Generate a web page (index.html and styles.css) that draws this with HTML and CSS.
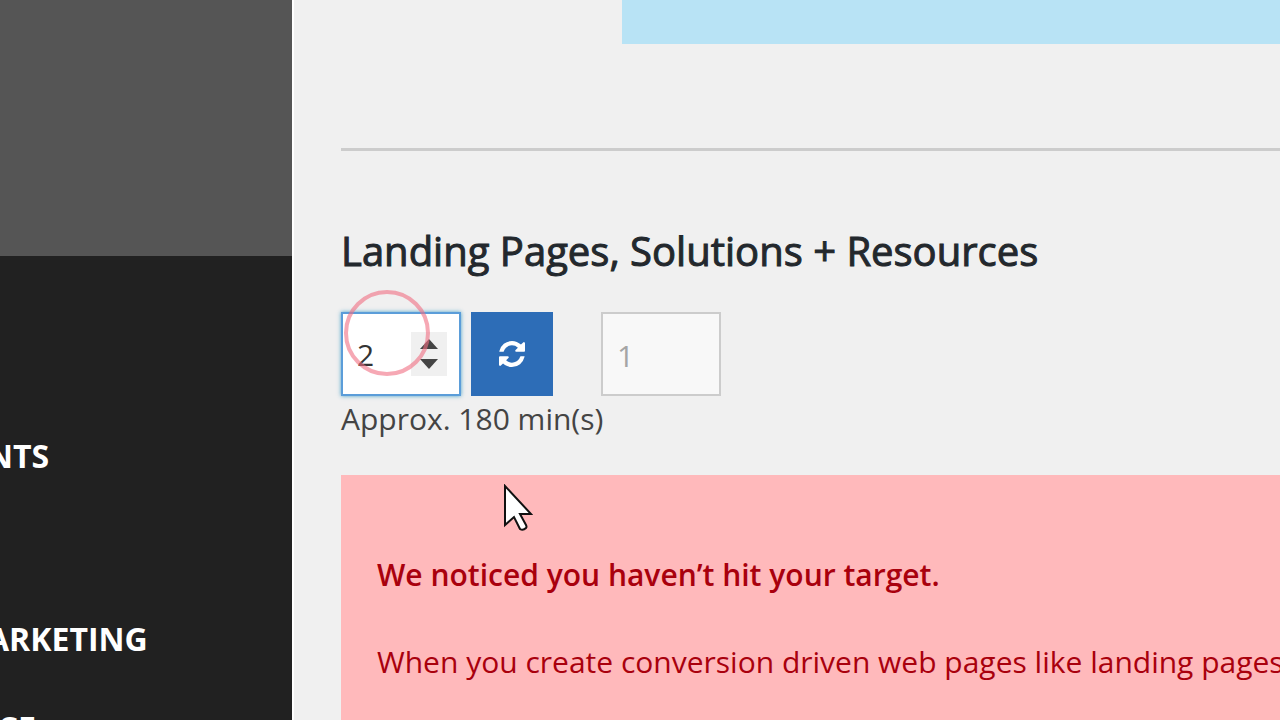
FILE: index.html
```html
<!DOCTYPE html>
<html lang="en">
<head>
    <meta charset="UTF-8">
    <meta name="viewport" content="width=device-width, initial-scale=1.0">
    <title>Landing Pages, Solutions + Resources</title>
    <link rel="stylesheet" href="styles.css">
</head>
<body>
    <aside class="sidebar">
        <div class="sidebar-head"></div>
        <nav class="menu">
            <a href="#">NTS</a>
            <a href="#" class="group">ARKETING</a>
            <a href="#">ICE</a>
        </nav>
    </aside>

    <main class="content">
        <div class="info-box"></div>
        <hr>

        <h2>Landing Pages, Solutions + Resources</h2>
        <form class="target-row">
            <div class="number-box">
                <input type="number" id="target" value="2" aria-label="Target pages">
                <div class="spinner">
                    <button type="button" aria-label="Increase"><svg viewBox="0 0 18 10"><path d="M0 10 9 0l9 10z"/></svg></button>
                    <button type="button" aria-label="Decrease"><svg viewBox="0 0 18 10"><path d="M0 0l9 10 9-10z"/></svg></button>
                </div>
                <span class="click-ring"></span>
            </div>
            <button type="button" class="refresh" aria-label="Refresh">
                <svg viewBox="0 0 1536 1536"><path d="M1511 928q0 5-1 7-64 268-268 434.500T764 1536q-146 0-282.500-55T238 1324l-129 129q-19 19-45 19t-45-19-19-45V960q0-26 19-45t45-19h448q26 0 45 19t19 45-19 45l-137 137q71 66 161 102t187 36q134 0 250-65t186-179q11-17 53-117 8-23 30-23h192q13 0 22.500 9.500t9.500 22.500zm25-800v448q0 26-19 45t-45 19h-448q-26 0-45-19t-19-45 19-45l138-138Q969 256 768 256q-134 0-250 65T332 500q-11 17-53 117-8 23-30 23H50q-13 0-22.500-9.500T18 608v-7q65-268 270-434.500T768 0q146 0 284 55.500T1297 212l130-129q19-19 45-19t45 19 19 45z"/></svg>
            </button>
            <input type="number" class="current" value="1" aria-label="Current pages" disabled>
        </form>
        <p class="approx">Approx. 180 min(s)</p>

        <section class="alert">
            <svg class="cursor" viewBox="0 0 30 48"><path d="M2 2v39l9-8 6 12q3 2 6-1 1-1 0-3l-6-11h11z"/></svg>
            <p><strong>We noticed you haven’t hit your target.</strong></p>
            <p>When you create conversion driven web pages like landing pages,</p>
        </section>
    </main>
</body>
</html>
```
FILE: styles.css
```css
* {
    box-sizing: border-box;
}
body {
    margin: 0;
    height: 100vh;
    overflow: hidden;
    display: flex;
    background: #f0f0f0;
    color: #444;
    font-family: "Open Sans", "Noto Sans", sans-serif;
    font-size: 30px;
    line-height: 40px;
}

/* Sidebar */
.sidebar {
    flex: 0 0 294px;
    overflow: hidden;
    background: #212121;
    border-right: 2px solid #fff;
}
.sidebar-head {
    height: 256px;
    background: #555;
}
.menu {
    display: flex;
    flex-direction: column;
    gap: 49px;
    padding-top: 180px;
    margin-left: -13px;
}
.menu a {
    color: #fff;
    font-size: 32px;
    font-weight: 700;
    text-decoration: none;
    white-space: nowrap;
}
.menu .group {
    margin-top: 94px;
}

/* Content */
.content {
    flex: 1;
    min-width: 0;
    display: flex;
    flex-direction: column;
    padding-left: 47px;
}
.info-box {
    height: 44px;
    margin-left: 281px;
    background: #b8e3f5;
}
hr {
    width: 100%;
    margin: 104px 0 0;
    border: 0;
    border-top: 3px solid #ccc;
}
h2 {
    margin: 76px 0 0;
    color: #23282d;
    font-size: 40px;
    font-weight: 500;
    line-height: 48px;
    -webkit-text-stroke: 1px #23282d;
}
.target-row {
    display: flex;
    margin-top: 37px;
}
.number-box,
.current {
    width: 120px;
    height: 84px;
    border: 2px solid #ccc;
}
.number-box {
    position: relative;
    display: flex;
    align-items: center;
    padding-right: 12px;
    background: #fff;
    border-color: #5b9dd9;
    box-shadow: 0 0 4px rgba(30, 140, 190, 0.8);
}
input {
    font: inherit;
    color: #333;
    padding: 2px 14px 0;
    appearance: textfield;
}
input::-webkit-inner-spin-button {
    display: none;
}
.number-box input {
    flex: 1;
    min-width: 0;
    border: 0;
    outline: 0;
    background: none;
}
.spinner {
    display: flex;
    flex-direction: column;
    justify-content: center;
    gap: 10px;
    width: 36px;
    height: 44px;
    background: #f0f0f0;
}
.spinner button {
    display: flex;
    justify-content: center;
    padding: 0;
    border: 0;
    background: none;
}
.spinner svg {
    width: 18px;
    height: 10px;
    fill: #444;
}
.click-ring {
    position: absolute;
    left: 1px;
    top: -24px;
    width: 86px;
    height: 86px;
    border: 4px solid rgba(240, 110, 130, 0.6);
    border-radius: 50%;
    pointer-events: none;
}
.refresh {
    display: flex;
    align-items: center;
    justify-content: center;
    width: 82px;
    height: 84px;
    margin: 0 48px 0 10px;
    padding: 0;
    border: 0;
    background: #2d6db7;
}
.refresh svg {
    width: 26px;
    height: 26px;
    fill: #fff;
}
.current {
    color: #a5a5a5;
    background: #f8f8f8;
}
.approx {
    margin: 3px 0 0;
}

/* Alert */
.alert {
    position: relative;
    flex: 1;
    margin-top: 36px;
    padding: 80px 0 0 36px;
    background: #ffb9bb;
    color: #a9000d;
    white-space: nowrap;
    overflow: hidden;
}
.alert p {
    margin: 0;
}
.alert p + p {
    margin-top: 47px;
}
.alert strong {
    font-weight: 600;
}
.cursor {
    position: absolute;
    left: 162px;
    top: 9px;
    width: 30px;
    height: 48px;
    fill: #fff;
    stroke: #111;
    stroke-width: 2;
}
```
